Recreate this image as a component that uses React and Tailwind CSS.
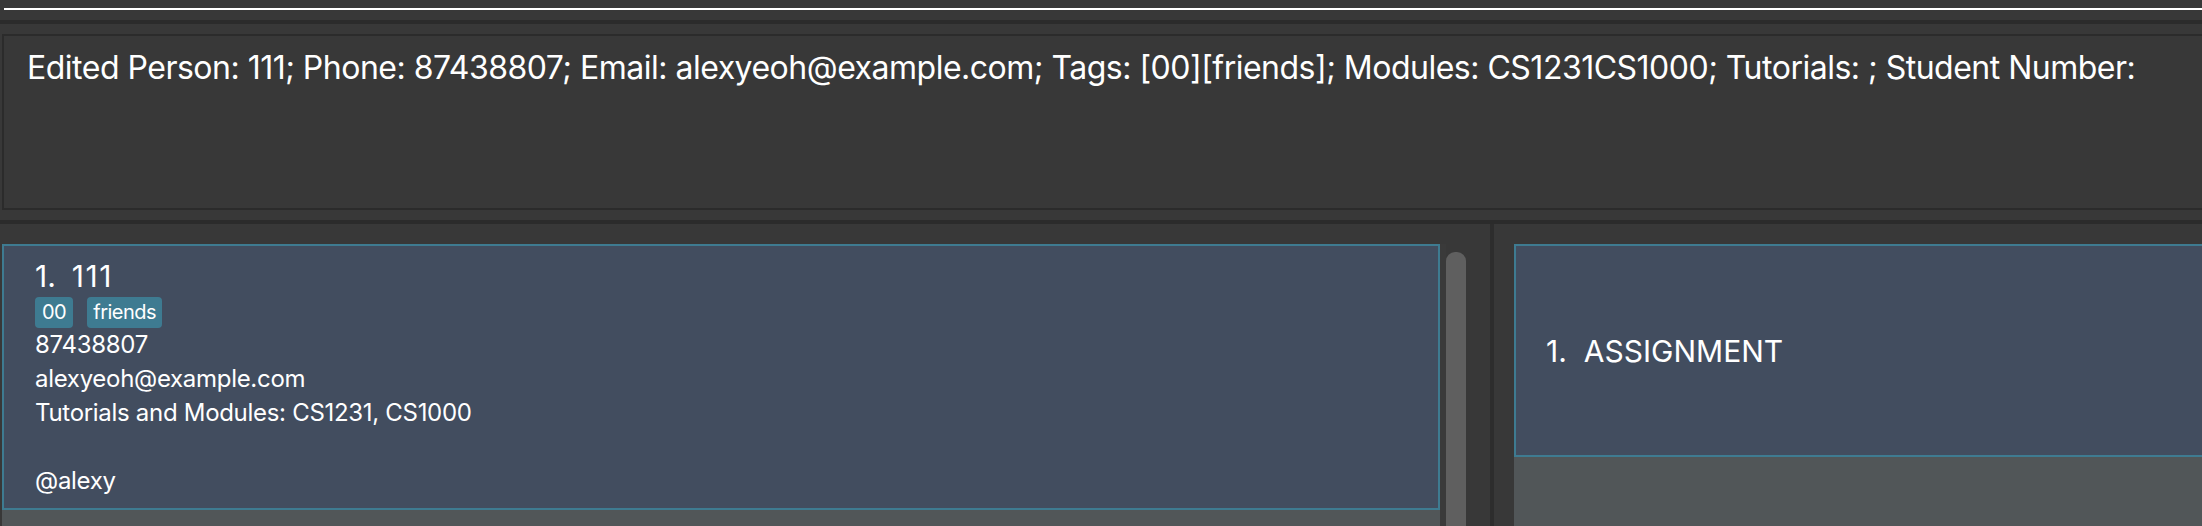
import React from "react";

const font = { fontFamily: "Inter, 'Noto Sans', sans-serif" };

export default function App() {
  return (
    <div
      className="w-[2202px] h-[526px] overflow-hidden bg-[#383838] flex flex-col text-white"
      style={font}
    >
      {/* command bar */}
      <div className="h-[20px] shrink-0 pt-[8px] pl-[4px]">
        <div className="h-[1.5px] bg-white" />
      </div>
      <div className="h-[4px] shrink-0 bg-[#2b2b2b]" />
      {/* result display */}
      <div className="shrink-0 pt-[10px] pb-[10px] pl-[2px]">
        <div className="h-[176px] border-y-2 border-l-2 border-[#2b2b2b] bg-[#383838] pl-[23px] pt-[13px]">
          <p className="text-[32px] leading-[38px] tracking-[-0.5px] whitespace-nowrap text-white">
            Edited Person: 111; Phone: 87438807; Email: alexyeoh@example.com; Tags: [00][friends]; Modules: CS1231CS1000; Tutorials: ; Student Number:
          </p>
        </div>
      </div>
      <div className="h-[4px] shrink-0 bg-[#2b2b2b]" />
      {/* lists */}
      <div className="flex-1 flex min-h-0">
        {/* person list */}
        <div className="w-[1490px] shrink-0 flex pt-[20px] pl-[2px]">
          <div className="w-[1438px] bg-[#515658] flex flex-col">
            <div className="h-[266px] border-2 border-[#3e7b91] bg-[#424d5f] pl-[31px] pt-[13px]">
              <div className="text-[30px] leading-[34px] whitespace-nowrap">
                <span>1.</span>
                <span className="ml-[16px] tracking-[1.5px]">111</span>
              </div>
              <div className="flex gap-[14px] mt-[4px]">
                <span className="h-[31px] px-[7px] rounded-[4px] bg-[#3e7b91] text-[20px] leading-[31px] tracking-[-0.5px]">
                  00
                </span>
                <span className="h-[31px] px-[6px] rounded-[4px] bg-[#3e7b91] text-[20px] leading-[31px] tracking-[-0.5px]">
                  friends
                </span>
              </div>
              <div className="text-[24px] leading-[34px] tracking-[-0.3px]">
                <div>87438807</div>
                <div>alexyeoh@example.com</div>
                <div>Tutorials and Modules: CS1231, CS1000</div>
                <div className="h-[34px]" />
                <div>@alexy</div>
              </div>
            </div>
          </div>
          <div className="w-[6px] bg-[#3a3a3a]" />
          <div className="w-[20px] pt-[8px]">
            <div className="h-full rounded-t-[9px] bg-[#5f5f5f]" />
          </div>
        </div>
        <div className="w-[4px] shrink-0 bg-[#2d2d2d]" />
        {/* task list */}
        <div className="flex-1 pt-[20px] pl-[20px]">
          <div className="h-full bg-[#515658] -mr-[10px]">
            <div className="h-[213px] border-y-2 border-l-2 border-[#3e7b91] bg-[#424d5f] pl-[30px] flex items-center">
              <div className="text-[30px] leading-[34px] whitespace-nowrap">
                <span>1.</span>
                <span className="ml-[17px]">ASSIGNMENT</span>
              </div>
            </div>
          </div>
        </div>
      </div>
    </div>
  );
}
